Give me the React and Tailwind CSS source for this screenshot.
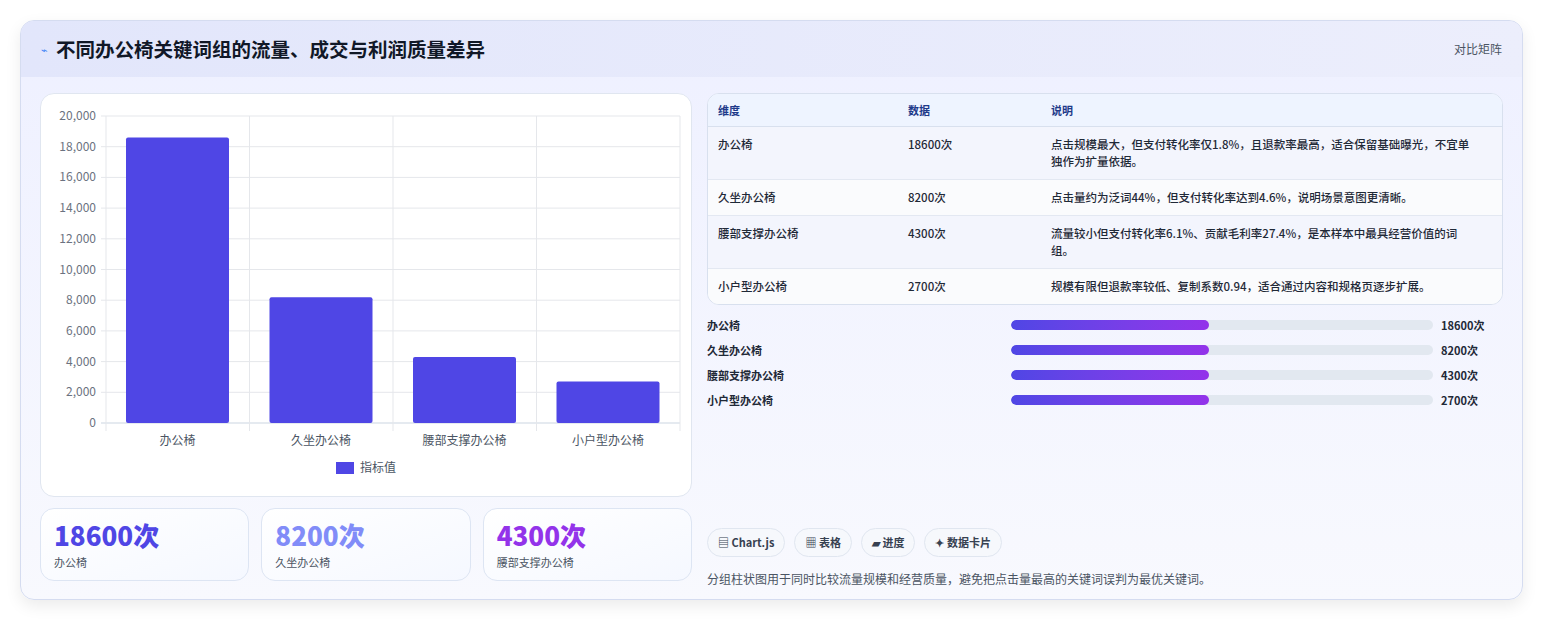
export default function App() {
  const font = { fontFamily: '"Noto Sans CJK SC", "Noto Sans", sans-serif' };
  const rows = [
    ["办公椅", "18600次", "点击规模最大，但支付转化率仅1.8%，且退款率最高，适合保留基础曝光，不宜单独作为扩量依据。"],
    ["久坐办公椅", "8200次", "点击量约为泛词44%，但支付转化率达到4.6%，说明场景意图更清晰。"],
    ["腰部支撑办公椅", "4300次", "流量较小但支付转化率6.1%、贡献毛利率27.4%，是本样本中最具经营价值的词组。"],
    ["小户型办公椅", "2700次", "规模有限但退款率较低、复制系数0.94，适合通过内容和规格页逐步扩展。"],
  ];
  const vals = [18600, 8200, 4300, 2700];
  const base = 329, h = 307;
  return (
    <div style={font} className="w-[1543px] h-[621px] bg-white pt-[20px] px-[20px]">
      <div className="w-[1503px] h-[580px] rounded-[14px] border border-[#d5dcf0] shadow-[0_6px_16px_rgba(0,0,0,0.08)] overflow-hidden bg-gradient-to-b from-[#eef0ff] to-[#f8f9fe]">
        <div className="h-[56px] flex items-center justify-between px-[20px] bg-gradient-to-r from-[#e2e6fb] to-[#eceefc]">
          <div className="flex items-center gap-[8px]">
            <span className="text-[11px] text-[#3b82f6]">⌁</span>
            <span className="text-[19.5px] font-bold text-[#111827]">不同办公椅关键词组的流量、成交与利润质量差异</span>
          </div>
          <span className="text-[12px] text-[#4b5563]">对比矩阵</span>
        </div>
        <div className="flex gap-[15px] px-[19px] pt-[16px]">
          <div className="w-[652px] flex flex-col gap-[11px]">
            <div className="h-[404px] bg-white rounded-[14px] border border-[#e0e6f0] relative">
              <svg width="650" height="402" className="absolute left-0 top-0" style={font}>
                {[0,1,2,3,4,5,6,7,8,9,10].map(i => {
                  const y = base - i * h / 10;
                  return (
                    <g key={i}>
                      <line x1="60" x2="639" y1={y} y2={y} stroke={i === 0 ? "#cbd5e1" : "#e5e7eb"} />
                      <text x="55" y={y + 4} textAnchor="end" fontSize="12" fill="#6b7280">{(i * 2000).toLocaleString("en-US")}</text>
                    </g>
                  );
                })}
                {[0,1,2,3,4].map(i => <line key={i} x1={65 + i*143.5} x2={65 + i*143.5} y1="22" y2={base+8} stroke="#e5e7eb" />)}
                {vals.map((v, i) => {
                  const bh = v / 20000 * h;
                  return <rect key={i} x={85 + i*143.5} y={base - bh} width="103" height={bh} fill="#4f46e5" rx="2" />;
                })}
                {rows.map((r, i) => <text key={i} x={136.5 + i*143.5} y="351" textAnchor="middle" fontSize="12" fill="#4b5563">{r[0]}</text>)}
                <rect x="295" y="368" width="18" height="12" fill="#4f46e5" />
                <text x="319" y="378" fontSize="12" fill="#4b5563">指标值</text>
              </svg>
            </div>
            <div className="flex gap-[12px]">
              {[["18600次","办公椅","text-[#4f46e5]"],["8200次","久坐办公椅","text-[#818cf8]"],["4300次","腰部支撑办公椅","text-[#9333ea]"]].map(([a,b,c]) => (
                <div key={b} className="flex-1 h-[73px] rounded-[14px] border border-[#dde5f3] bg-gradient-to-br from-white to-[#f5f8ff] px-[13px] pt-[9px]">
                  <div className={`text-[26px] font-extrabold leading-[34px] ${c}`}>{a}</div>
                  <div className="text-[11px] text-[#4b5563] mt-[2px]">{b}</div>
                </div>
              ))}
            </div>
          </div>
          <div className="flex-1 flex flex-col">
            <div className="rounded-[12px] border border-[#d8e0ee] overflow-hidden bg-white">
              <div className="flex h-[33px] items-center bg-[#eef4ff] border-b border-[#d8e0ee] text-[11px] font-semibold text-[#1e3a8a]">
                <div className="w-[200px] pl-[10px]">维度</div><div className="w-[143px]">数据</div><div className="flex-1">说明</div>
              </div>
              {rows.map((r, i) => (
                <div key={i} className={`flex py-[9px] text-[11.5px] leading-[17px] text-[#1f2937] font-medium ${i%2==0?"bg-[#f3f5fd]":"bg-[#fafbfd]"} ${i<3?"border-b border-[#e3e8f2]":""}`}>
                  <div className="w-[200px] pl-[10px]">{r[0]}</div><div className="w-[143px]">{r[1]}</div><div className="flex-1 pr-[28px]">{r[2]}</div>
                </div>
              ))}
            </div>
            <div className="flex flex-col gap-[11px] mt-[13px]">
              {rows.map((r, i) => (
                <div key={i} className="flex items-center h-[14px] text-[11px] font-semibold text-[#1f2937]">
                  <div className="w-[304px]">{r[0]}</div>
                  <div className="w-[422px] h-[10px] rounded-full bg-[#e2e8f0] overflow-hidden">
                    <div className="w-[198px] h-full rounded-full bg-gradient-to-r from-[#4f46e5] to-[#9333ea]" />
                  </div>
                  <div className="ml-[8px]">{r[1]}</div>
                </div>
              ))}
            </div>
            <div className="flex gap-[9px] mt-[121px]">
              {["▤ Chart.js","▦ 表格","▰ 进度","✦ 数据卡片"].map(t => (
                <div key={t} className="h-[29px] px-[10px] rounded-full border border-[#e0e6f0] bg-[#f6f8fc] flex items-center text-[11px] font-semibold text-[#374151]">{t}</div>
              ))}
            </div>
            <div className="mt-[13px] text-[12px] text-[#4b5563]">分组柱状图用于同时比较流量规模和经营质量，避免把点击量最高的关键词误判为最优关键词。</div>
          </div>
        </div>
      </div>
    </div>
  );
}
